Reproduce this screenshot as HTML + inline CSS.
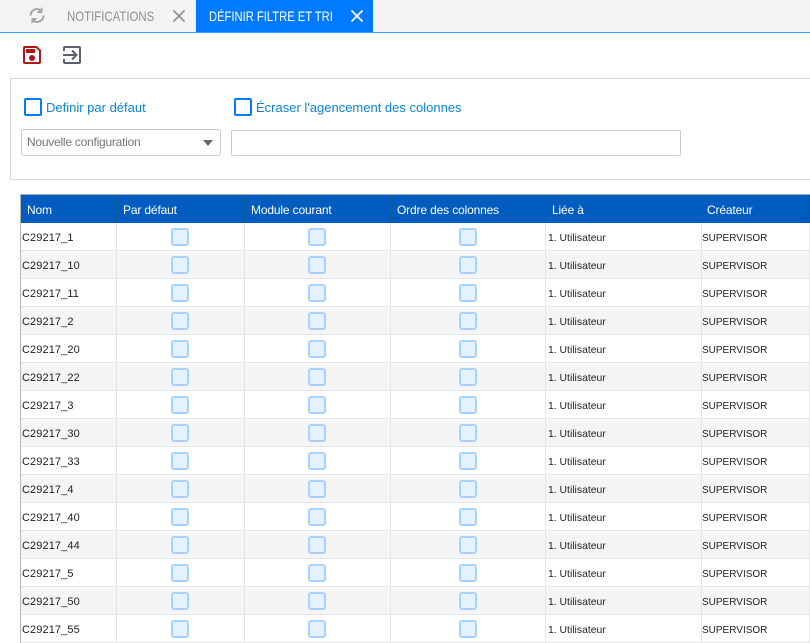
<!DOCTYPE html>
<html lang="fr">
<head>
<meta charset="utf-8">
<title>Définir filtre et tri</title>
<style>
html,body{margin:0;padding:0;background:#fff}
body{width:810px;height:643px;overflow:hidden;position:relative;font-family:"Liberation Sans",sans-serif}
.a{position:absolute;white-space:nowrap}
#bar{left:0;top:0;width:810px;height:32px;background:#f3f3f3}
#line{left:0;top:32px;width:810px;height:1px;background:#3b99fc}
#tab{left:196px;top:0;width:177px;height:32px;background:#007bff}
.tt{font-size:14px;line-height:32px;top:0;transform:scaleX(.815);transform-origin:0 0}
#panel{left:10px;top:78px;width:810px;height:102px;box-sizing:border-box;border:1px solid #d9d9d9}
.cb{width:14px;height:14px;border:2px solid #007bff;border-radius:2px;background:#fff}
.lb{font-size:13px;color:#0b84d6;line-height:16px}
#sel{left:21px;top:129px;width:200px;height:27px;box-sizing:border-box;border:1px solid #ccc;border-radius:3px;background:#fff;font-size:12px;letter-spacing:-.24px;color:#777;line-height:24px;padding-left:5px}
#arr{left:203px;top:140px;width:0;height:0;border-left:5px solid transparent;border-right:5px solid transparent;border-top:6px solid #666}
#inp{left:231px;top:130px;width:450px;height:26px;box-sizing:border-box;border:1px solid #ccc;border-radius:2px;background:#fff}
table{position:absolute;left:20px;top:194px;width:790px;table-layout:fixed;border-collapse:separate;border-spacing:0;border-top:1px solid #a0a8b0;border-left:1px solid #b5b5b5;font-size:11px;color:#222}
th{height:28px;padding:2px 0 0 6px;background:#005dbf;color:#fff;font-weight:normal;font-size:12px;letter-spacing:-.15px;text-align:left;border-right:1px solid #0a5a96;box-sizing:border-box;overflow:hidden;white-space:nowrap}
th:last-child{padding-left:5px}
td{height:28px;box-sizing:border-box;padding:2px 0 0 1px;border-right:1px solid #e6e6e6;border-bottom:1px solid #e6e6e6;overflow:hidden;white-space:nowrap;letter-spacing:.1px}
td:nth-child(5){font-size:10.4px;letter-spacing:0;padding:3px 0 0 2px}
td:nth-child(6){font-size:10px;letter-spacing:0;padding:3px 0 0 0}
tr.o td{background:#f5f5f5}
td.c{padding:0;text-align:center}
i{display:block;width:14px;height:14px;border:2px solid #a8d2ff;border-radius:3px;background:#e4f1ff;margin:0 auto}
td:nth-child(2) i,td:nth-child(3) i{position:relative;left:-1px}
</style>
</head>
<body>
<div class="a" id="bar"></div>
<div class="a" id="line"></div>
<svg class="a" style="left:29px;top:7px" width="16" height="17" viewBox="0 0 16 17" fill="none" stroke="#a6a6a6" stroke-width="2">
<path d="M1.500 8.500a6.500 6.500 0 0 1 10-5.400"/><path d="M14.500 8.500a6.500 6.500 0 0 1-10 5.400"/>
<path d="M13.500 0v6h-6z" fill="#a6a6a6" stroke="none"/><path d="M2.500 17v-6h6z" fill="#a6a6a6" stroke="none"/>
</svg>
<div class="a tt" style="left:67px;color:#8f8f8f">NOTIFICATIONS</div>
<svg class="a" style="left:173px;top:10px" width="12" height="12" viewBox="0 0 12 12" stroke="#8f8f8f" stroke-width="1.7" fill="none"><path d="M.5.500l11 11M11.500.500l-11 11"/></svg>
<div class="a" id="tab"></div>
<div class="a tt" style="left:209px;color:#fff;transform:scaleX(.8)">DÉFINIR FILTRE ET TRI</div>
<svg class="a" style="left:351px;top:10px" width="12" height="12" viewBox="0 0 12 12" stroke="#fff" stroke-width="1.7" fill="none"><path d="M.5.500l11 11M11.500.500l-11 11"/></svg>

<svg class="a" style="left:23px;top:46px" width="18" height="18" viewBox="0 0 18 18">
<path d="M2 1h11.500L17 4.500V16a1 1 0 0 1-1 1H2a1 1 0 0 1-1-1V2a1 1 0 0 1 1-1z" fill="none" stroke="#b01818" stroke-width="2"/>
<rect x="3" y="3" width="9" height="4" fill="#b01818"/><circle cx="9" cy="12" r="3" fill="#b01818"/>
</svg>
<svg class="a" style="left:63px;top:46px" width="18" height="18" viewBox="0 0 18 18" fill="none" stroke="#5c6068" stroke-width="2">
<path d="M1 5V2a1 1 0 0 1 1-1h14a1 1 0 0 1 1 1v14a1 1 0 0 1-1 1H2a1 1 0 0 1-1-1v-3"/>
<path d="M0 9h13M9 4.500l4.500 4.500-4.500 4.500"/>
</svg>

<div class="a" id="panel"></div>
<div class="a cb" style="left:24px;top:98px"></div>
<div class="a lb" style="left:46px;top:100px">Definir par défaut</div>
<div class="a cb" style="left:234px;top:98px"></div>
<div class="a lb" style="left:256px;top:100px">Écraser l'agencement des colonnes</div>
<div class="a" id="sel">Nouvelle configuration</div>
<div class="a" id="arr"></div>
<div class="a" id="inp"></div>

<table>
<colgroup><col style="width:96px"><col style="width:128px"><col style="width:146px"><col style="width:155px"><col style="width:156px"><col style="width:108px"></colgroup>
<tr><th>Nom</th><th>Par défaut</th><th>Module courant</th><th>Ordre des colonnes</th><th>Liée à</th><th>Créateur</th></tr>
<tr><td>C29217_1</td><td class="c"><i></i></td><td class="c"><i></i></td><td class="c"><i></i></td><td>1. Utilisateur</td><td>SUPERVISOR</td></tr>
<tr class="o"><td>C29217_10</td><td class="c"><i></i></td><td class="c"><i></i></td><td class="c"><i></i></td><td>1. Utilisateur</td><td>SUPERVISOR</td></tr>
<tr><td>C29217_11</td><td class="c"><i></i></td><td class="c"><i></i></td><td class="c"><i></i></td><td>1. Utilisateur</td><td>SUPERVISOR</td></tr>
<tr class="o"><td>C29217_2</td><td class="c"><i></i></td><td class="c"><i></i></td><td class="c"><i></i></td><td>1. Utilisateur</td><td>SUPERVISOR</td></tr>
<tr><td>C29217_20</td><td class="c"><i></i></td><td class="c"><i></i></td><td class="c"><i></i></td><td>1. Utilisateur</td><td>SUPERVISOR</td></tr>
<tr class="o"><td>C29217_22</td><td class="c"><i></i></td><td class="c"><i></i></td><td class="c"><i></i></td><td>1. Utilisateur</td><td>SUPERVISOR</td></tr>
<tr><td>C29217_3</td><td class="c"><i></i></td><td class="c"><i></i></td><td class="c"><i></i></td><td>1. Utilisateur</td><td>SUPERVISOR</td></tr>
<tr class="o"><td>C29217_30</td><td class="c"><i></i></td><td class="c"><i></i></td><td class="c"><i></i></td><td>1. Utilisateur</td><td>SUPERVISOR</td></tr>
<tr><td>C29217_33</td><td class="c"><i></i></td><td class="c"><i></i></td><td class="c"><i></i></td><td>1. Utilisateur</td><td>SUPERVISOR</td></tr>
<tr class="o"><td>C29217_4</td><td class="c"><i></i></td><td class="c"><i></i></td><td class="c"><i></i></td><td>1. Utilisateur</td><td>SUPERVISOR</td></tr>
<tr><td>C29217_40</td><td class="c"><i></i></td><td class="c"><i></i></td><td class="c"><i></i></td><td>1. Utilisateur</td><td>SUPERVISOR</td></tr>
<tr class="o"><td>C29217_44</td><td class="c"><i></i></td><td class="c"><i></i></td><td class="c"><i></i></td><td>1. Utilisateur</td><td>SUPERVISOR</td></tr>
<tr><td>C29217_5</td><td class="c"><i></i></td><td class="c"><i></i></td><td class="c"><i></i></td><td>1. Utilisateur</td><td>SUPERVISOR</td></tr>
<tr class="o"><td>C29217_50</td><td class="c"><i></i></td><td class="c"><i></i></td><td class="c"><i></i></td><td>1. Utilisateur</td><td>SUPERVISOR</td></tr>
<tr><td>C29217_55</td><td class="c"><i></i></td><td class="c"><i></i></td><td class="c"><i></i></td><td>1. Utilisateur</td><td>SUPERVISOR</td></tr>
</table>
</body>
</html>
